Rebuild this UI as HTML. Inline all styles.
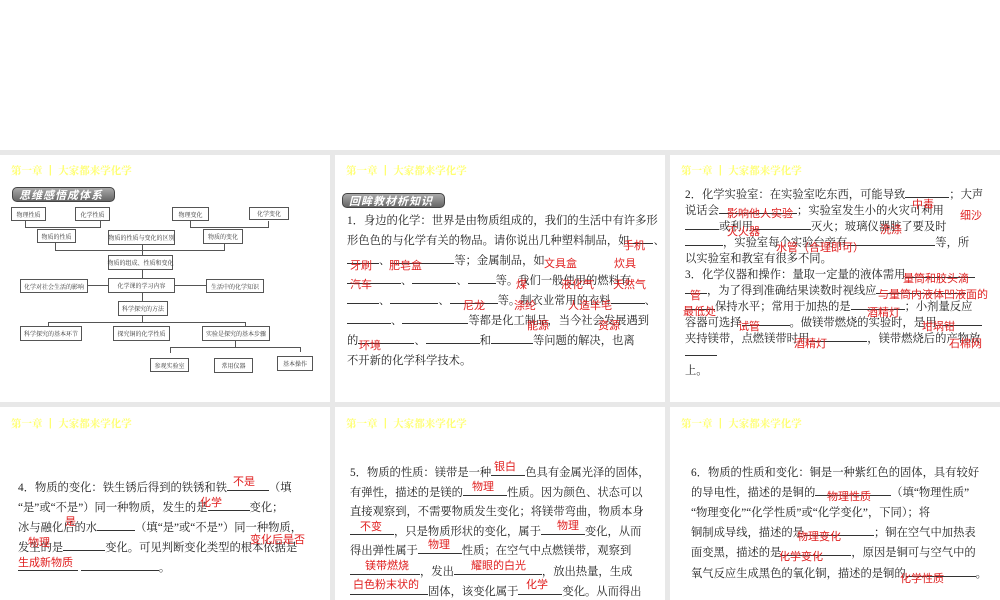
<!DOCTYPE html>
<html><head><meta charset="utf-8">
<style>
*{margin:0;padding:0;box-sizing:border-box}
body{width:1000px;height:600px;background:#e8e8e8;position:relative;overflow:hidden;font-family:"Liberation Sans","Noto Sans CJK SC",sans-serif;}
.s{position:absolute;background:#fff;overflow:hidden}
.t{position:absolute;color:#ffff70;font-size:10.5px;font-family:"Liberation Serif","Noto Serif CJK SC",serif;font-weight:bold;white-space:nowrap}
.a{position:absolute;white-space:nowrap;color:#222;font-size:11.3px;font-family:"Liberation Serif","Noto Serif CJK SC",serif}
.r{position:absolute;white-space:nowrap;color:#e02020;font-size:11px;font-family:"Noto Sans CJK SC",sans-serif}
.b{position:absolute;border:1px solid #555;font-size:6px;color:#333;display:flex;align-items:center;justify-content:center;white-space:nowrap;background:#fff;font-family:"Noto Serif CJK SC",serif}
.l{position:absolute;background:#555}
.u{display:inline-block;border-bottom:1px solid #333;height:10px;vertical-align:baseline}
.bn{position:absolute;background:linear-gradient(#aaa,#666);border-radius:5px;color:#fff;font-style:italic;font-weight:bold;font-size:11px;line-height:15px;padding-left:6px;letter-spacing:1px;font-family:"Noto Sans CJK SC",sans-serif;border:1px solid #444}
</style></head><body>
<div class="s" style="left:0;top:0;width:1000px;height:150px"></div>

<!-- slide 1 -->
<div class="s" style="left:0;top:155px;width:330px;height:247px">
<div class="t" style="left:11px;top:8px">第一章 ┃ 大家都来学化学</div>
<div class="bn" style="left:12px;top:32px;width:103px;height:15px">思维感悟成体系</div>
<div class="l" style="left:25px;top:66px;width:1px;height:7px"></div>
<div class="l" style="left:100px;top:66px;width:1px;height:7px"></div>
<div class="l" style="left:25px;top:72px;width:76px;height:1px"></div>
<div class="l" style="left:190px;top:66px;width:1px;height:7px"></div>
<div class="l" style="left:268px;top:66px;width:1px;height:7px"></div>
<div class="l" style="left:190px;top:72px;width:79px;height:1px"></div>
<div class="l" style="left:55px;top:88px;width:1px;height:8px"></div>
<div class="l" style="left:224px;top:88px;width:1px;height:8px"></div>
<div class="l" style="left:55px;top:95px;width:170px;height:1px"></div>
<div class="l" style="left:142px;top:90px;width:1px;height:12px"></div>
<div class="l" style="left:142px;top:115px;width:1px;height:9px"></div>
<div class="l" style="left:88px;top:130px;width:20px;height:1px"></div>
<div class="l" style="left:175px;top:130px;width:31px;height:1px"></div>
<div class="l" style="left:142px;top:138px;width:1px;height:9px"></div>
<div class="l" style="left:142px;top:161px;width:1px;height:7px"></div>
<div class="l" style="left:48px;top:167px;width:198px;height:1px"></div>
<div class="l" style="left:48px;top:167px;width:1px;height:5px"></div>
<div class="l" style="left:245px;top:167px;width:1px;height:5px"></div>
<div class="l" style="left:235px;top:186px;width:1px;height:7px"></div>
<div class="l" style="left:170px;top:192px;width:131px;height:1px"></div>
<div class="l" style="left:170px;top:192px;width:1px;height:6px"></div>
<div class="l" style="left:300px;top:192px;width:1px;height:5px"></div>
<div class="b" style="left:11px;top:52px;width:35px;height:14px">物理性质</div>
<div class="b" style="left:75px;top:52px;width:35px;height:14px">化学性质</div>
<div class="b" style="left:172px;top:52px;width:37px;height:14px">物理变化</div>
<div class="b" style="left:249px;top:52px;width:40px;height:13px">化学变化</div>
<div class="b" style="left:37px;top:74px;width:39px;height:14px">物质的性质</div>
<div class="b" style="left:108px;top:75px;width:67px;height:15px">物质的性质与变化的区别</div>
<div class="b" style="left:203px;top:74px;width:40px;height:15px">物质的变化</div>
<div class="b" style="left:108px;top:100px;width:65px;height:15px">物质的组成、性质和变化</div>
<div class="b" style="left:108px;top:123px;width:67px;height:15px">化学课的学习内容</div>
<div class="b" style="left:20px;top:124px;width:68px;height:14px">化学对社会生活的影响</div>
<div class="b" style="left:206px;top:124px;width:58px;height:14px">生活中的化学知识</div>
<div class="b" style="left:118px;top:146px;width:50px;height:15px">科学探究的方法</div>
<div class="b" style="left:20px;top:171px;width:62px;height:15px">科学探究的基本环节</div>
<div class="b" style="left:113px;top:171px;width:57px;height:15px">探究铜的化学性质</div>
<div class="b" style="left:202px;top:171px;width:68px;height:15px">实验是探究的基本步骤</div>
<div class="b" style="left:150px;top:203px;width:39px;height:14px">参观实验室</div>
<div class="b" style="left:214px;top:203px;width:39px;height:15px">常用仪器</div>
<div class="b" style="left:277px;top:201px;width:36px;height:15px">基本操作</div>
</div>

<!-- slide 2 -->
<div class="s" style="left:335px;top:155px;width:330px;height:247px">
<div class="t" style="left:11px;top:8px">第一章 ┃ 大家都来学化学</div>
<div class="bn" style="left:7px;top:38px;width:103px;height:15px">回眸教材析知识</div>
<div class="a" style="left:12px;top:57px">1．身边的化学：世界是由物质组成的，我们的生活中有许多形</div>
<div class="a" style="left:12px;top:77px">形色色的与化学有关的物品。请你说出几种塑料制品，如<span class="u" style="width:24px"></span>、</div>
<div class="a" style="left:12px;top:97px"><span class="u" style="width:32px"></span>、<span class="u" style="width:64px"></span>等；金属制品，如</div>
<div class="a" style="left:12px;top:117px"><span class="u" style="width:54px"></span>、<span class="u" style="width:44px"></span>、<span class="u" style="width:28px"></span>等。我们一般使用的燃料有</div>
<div class="a" style="left:12px;top:137px"><span class="u" style="width:32px"></span>、<span class="u" style="width:48px"></span>、<span class="u" style="width:48px"></span>等。制衣业常用的衣料<span class="u" style="width:34px"></span>、</div>
<div class="a" style="left:12px;top:157px"><span class="u" style="width:44px"></span>、<span class="u" style="width:66px"></span>等都是化工制品，当今社会发展遇到</div>
<div class="a" style="left:12px;top:177px">的<span class="u" style="width:56px"></span>、<span class="u" style="width:54px"></span>和<span class="u" style="width:42px"></span>等问题的解决，也离</div>
<div class="a" style="left:12px;top:197px">不开新的化学科学技术。</div>
<div class="r" style="left:288px;top:82px">手机</div>
<div class="r" style="left:15px;top:102px">牙刷</div>
<div class="r" style="left:54px;top:102px">肥皂盒</div>
<div class="r" style="left:209px;top:100px">文具盒</div>
<div class="r" style="left:279px;top:100px">炊具</div>
<div class="r" style="left:15px;top:121px">汽车</div>
<div class="r" style="left:181px;top:121px">煤</div>
<div class="r" style="left:226px;top:121px">液化气</div>
<div class="r" style="left:278px;top:121px">天然气</div>
<div class="r" style="left:128px;top:142px">尼龙</div>
<div class="r" style="left:179px;top:142px">涤纶</div>
<div class="r" style="left:233px;top:142px">人造羊毛</div>
<div class="r" style="left:192px;top:162px">能源</div>
<div class="r" style="left:263px;top:162px">资源</div>
<div class="r" style="left:24px;top:182px">环境</div>
</div>

<!-- slide 3 -->
<div class="s" style="left:670px;top:155px;width:330px;height:247px">
<div class="t" style="left:11px;top:8px">第一章 ┃ 大家都来学化学</div>
<div class="a" style="left:15px;top:31px">2．化学实验室：在实验室吃东西，可能导致<span class="u" style="width:44px"></span>；大声</div>
<div class="a" style="left:15px;top:47px">说话会<span class="u" style="width:78px"></span>；实验室发生小的火灾可利用</div>
<div class="a" style="left:15px;top:63px"><span class="u" style="width:34px"></span>或利用<span class="u" style="width:58px"></span>灭火；玻璃仪器脏了要及时</div>
<div class="a" style="left:15px;top:79px"><span class="u" style="width:38px"></span>，实验室每个实验台旁有<span class="u" style="width:88px"></span>等，所</div>
<div class="a" style="left:15px;top:95px">以实验室和教室有很多不同。</div>
<div class="a" style="left:15px;top:111px">3．化学仪器和操作：量取一定量的液体需用<span class="u" style="width:70px"></span></div>
<div class="a" style="left:15px;top:127px"><span class="u" style="width:22px"></span>，为了得到准确结果读数时视线应<span class="u" style="width:90px"></span></div>
<div class="a" style="left:15px;top:143px"><span class="u" style="width:30px"></span>保持水平；常用于加热的是<span class="u" style="width:54px"></span>；小剂量反应</div>
<div class="a" style="left:15px;top:159px">容器可选择<span class="u" style="width:48px"></span>。做镁带燃烧的实验时，是用<span class="u" style="width:46px"></span></div>
<div class="a" style="left:15px;top:175px">夹持镁带，点燃镁带时用<span class="u" style="width:58px"></span>，镁带燃烧后的产物放</div>
<div class="a" style="left:15px;top:191px"><span class="u" style="width:32px"></span></div>
<div class="a" style="left:15px;top:207px">上。</div>
<div class="r" style="left:57px;top:50px">影响他人实验</div>
<div class="r" style="left:242px;top:41px">中毒</div>
<div class="r" style="left:290px;top:52px">细沙</div>
<div class="r" style="left:57px;top:68px">灭火器</div>
<div class="r" style="left:210px;top:66px">洗涤</div>
<div class="r" style="left:106px;top:84px">水管（合理即可）</div>
<div class="r" style="left:233px;top:115px">量筒和胶头滴</div>
<div class="r" style="left:20px;top:132px">管</div>
<div class="r" style="left:208px;top:131px">与量筒内液体凹液面的</div>
<div class="r" style="left:13px;top:148px">最低处</div>
<div class="r" style="left:197px;top:149px">酒精灯</div>
<div class="r" style="left:68px;top:163px">试管</div>
<div class="r" style="left:252px;top:163px">坩埚钳</div>
<div class="r" style="left:124px;top:180px">酒精灯</div>
<div class="r" style="left:279px;top:180px">石棉网</div>
</div>

<!-- slide 4 -->
<div class="s" style="left:0;top:407px;width:330px;height:193px">
<div class="t" style="left:11px;top:9px">第一章 ┃ 大家都来学化学</div>
<div class="a" style="left:18px;top:72px">4．物质的变化：铁生锈后得到的铁锈和铁<span class="u" style="width:42px"></span>（填</div>
<div class="a" style="left:18px;top:92px">“是”或“不是”）同一种物质，发生的是<span class="u" style="width:42px"></span>变化；</div>
<div class="a" style="left:18px;top:112px">冰与融化后的水<span class="u" style="width:38px"></span>（填“是”或“不是”）同一种物质，</div>
<div class="a" style="left:18px;top:132px">发生的是<span class="u" style="width:42px"></span>变化。可见判断变化类型的根本依据是</div>
<div class="a" style="left:18px;top:152px"><span class="u" style="width:60px"></span> <span class="u" style="width:78px"></span>。</div>
<div class="r" style="left:233px;top:66px">不是</div>
<div class="r" style="left:200px;top:87px">化学</div>
<div class="r" style="left:65px;top:106px">是</div>
<div class="r" style="left:28px;top:127px">物理</div>
<div class="r" style="left:250px;top:124px">变化后是否</div>
<div class="r" style="left:18px;top:147px">生成新物质</div>
</div>

<!-- slide 5 -->
<div class="s" style="left:335px;top:407px;width:330px;height:193px">
<div class="t" style="left:11px;top:9px">第一章 ┃ 大家都来学化学</div>
<div class="a" style="left:15px;top:57px">5．物质的性质：镁带是一种<span class="u" style="width:34px"></span>色具有金属光泽的固体，</div>
<div class="a" style="left:15px;top:77px">有弹性，描述的是镁的<span class="u" style="width:44px"></span>性质。因为颜色、状态可以</div>
<div class="a" style="left:15px;top:96px">直接观察到，不需要物质发生变化；将镁带弯曲，物质本身</div>
<div class="a" style="left:15px;top:116px"><span class="u" style="width:44px"></span>，只是物质形状的变化，属于<span class="u" style="width:44px"></span>变化，从而</div>
<div class="a" style="left:15px;top:135px">得出弹性属于<span class="u" style="width:44px"></span>性质；在空气中点燃镁带，观察到</div>
<div class="a" style="left:15px;top:156px"><span class="u" style="width:70px"></span>，发出<span class="u" style="width:88px"></span>，放出热量，生成</div>
<div class="a" style="left:15px;top:176px"><span class="u" style="width:78px"></span>固体，该变化属于<span class="u" style="width:44px"></span>变化。从而得出</div>
<div class="r" style="left:159px;top:51px">银白</div>
<div class="r" style="left:137px;top:71px">物理</div>
<div class="r" style="left:25px;top:111px">不变</div>
<div class="r" style="left:222px;top:110px">物理</div>
<div class="r" style="left:93px;top:129px">物理</div>
<div class="r" style="left:30px;top:150px">镁带燃烧</div>
<div class="r" style="left:136px;top:150px">耀眼的白光</div>
<div class="r" style="left:18px;top:169px">白色粉末状的</div>
<div class="r" style="left:191px;top:169px">化学</div>
</div>

<!-- slide 6 -->
<div class="s" style="left:670px;top:407px;width:330px;height:193px">
<div class="t" style="left:11px;top:9px">第一章 ┃ 大家都来学化学</div>
<div class="a" style="left:21px;top:57px">6．物质的性质和变化：铜是一种紫红色的固体，具有较好</div>
<div class="a" style="left:21px;top:77px">的导电性，描述的是铜的<span class="u" style="width:76px"></span>（填“物理性质”</div>
<div class="a" style="left:21px;top:97px">“物理变化”“化学性质”或“化学变化”，下同）；将</div>
<div class="a" style="left:21px;top:117px">铜制成导线，描述的是<span class="u" style="width:70px"></span>；铜在空气中加热表</div>
<div class="a" style="left:21px;top:137px">面变黑，描述的是<span class="u" style="width:70px"></span>，原因是铜可与空气中的</div>
<div class="a" style="left:21px;top:158px">氧气反应生成黑色的氧化铜，描述的是铜的<span class="u" style="width:70px"></span>。</div>
<div class="r" style="left:157px;top:81px">物理性质</div>
<div class="r" style="left:127px;top:121px">物理变化</div>
<div class="r" style="left:109px;top:141px">化学变化</div>
<div class="r" style="left:230px;top:163px">化学性质</div>
</div>
</body></html>
